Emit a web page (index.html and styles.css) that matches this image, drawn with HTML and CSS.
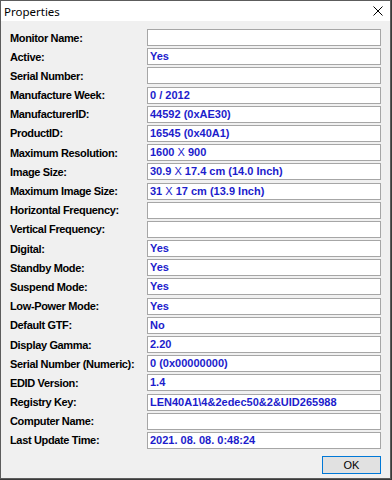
FILE: index.html
```html
<!DOCTYPE html>
<html lang="en">
<head>
    <meta charset="UTF-8">
    <title>Properties</title>
    <link rel="stylesheet" href="styles.css">
</head>
<body>
    <div class="window">
        <div class="titlebar">
            <span class="title">Properties</span>
            <svg class="close" width="10" height="10" viewBox="0 0 10 10">
                <path d="M0.5 0.5 L9.5 9.5 M9.5 0.5 L0.5 9.5" stroke="#000" stroke-width="1" fill="none"/>
            </svg>
        </div>

        <div class="content">
            <div class="props">
                <label>Monitor Name:</label><div class="field"></div>
                <label>Active:</label><div class="field">Yes</div>
                <label>Serial Number:</label><div class="field"></div>
                <label>Manufacture Week:</label><div class="field">0 / 2012</div>
                <label>ManufacturerID:</label><div class="field">44592 (0xAE30)</div>
                <label>ProductID:</label><div class="field">16545 (0x40A1)</div>
                <label>Maximum Resolution:</label><div class="field">1600 <span class="times">X</span> 900</div>
                <label>Image Size:</label><div class="field">30.9 <span class="times">X</span> 17.4 cm (14.0 Inch)</div>
                <label>Maximum Image Size:</label><div class="field">31 <span class="times">X</span> 17 cm (13.9 Inch)</div>
                <label>Horizontal Frequency:</label><div class="field"></div>
                <label>Vertical Frequency:</label><div class="field"></div>
                <label>Digital:</label><div class="field">Yes</div>
                <label>Standby Mode:</label><div class="field">Yes</div>
                <label>Suspend Mode:</label><div class="field">Yes</div>
                <label>Low-Power Mode:</label><div class="field">Yes</div>
                <label>Default GTF:</label><div class="field">No</div>
                <label>Display Gamma:</label><div class="field">2.20</div>
                <label>Serial Number (Numeric):</label><div class="field">0 (0x00000000)</div>
                <label>EDID Version:</label><div class="field">1.4</div>
                <label>Registry Key:</label><div class="field">LEN40A1\4&amp;2edec50&amp;2&amp;UID265988</div>
                <label>Computer Name:</label><div class="field"></div>
                <label>Last Update Time:</label><div class="field">2021. 08. 08. 0:48:24</div>
            </div>

            <div class="buttons">
                <button class="ok">OK</button>
            </div>
        </div>
    </div>
</body>
</html>
```

FILE: styles.css
```css
* {
    box-sizing: border-box;
    margin: 0;
    padding: 0;
}

body {
    width: 392px;
    height: 480px;
    background-color: #3a3a3a;
    font-family: "Liberation Sans", Arial, sans-serif;
}

.window {
    width: 391px;
    height: 479px;
    border: 1px solid #5c5c5c;
    background: #f0f0f0;
    display: flex;
    flex-direction: column;
}

.titlebar {
    height: 20px;
    background: white;
    display: flex;
    align-items: center;
    justify-content: space-between;
    padding: 0 7px 0 3px;
}

.title {
    font-family: "Noto Sans", sans-serif;
    font-size: 11.5px;
    color: #000;
}

.content {
    padding: 8px 9px 0 9px;
}

.props {
    display: grid;
    grid-template-columns: 137px 234px;
    grid-auto-rows: 17px;
    row-gap: 2.19px;
    align-items: center;
}

.props label {
    font-size: 11px;
    font-weight: bold;
    letter-spacing: -0.35px;
    color: #000;
}

.field {
    height: 17px;
    background: white;
    border: 1px solid #a6a6a6;
    padding-left: 2px;
    font-size: 11px;
    font-weight: bold;
    line-height: 15px;
    color: #1c1ccc;
    white-space: nowrap;
    overflow: hidden;
}

.field .times {
    font-weight: normal;
}

.buttons {
    display: flex;
    justify-content: flex-end;
    padding-top: 7px;
}

.ok {
    width: 59px;
    height: 18px;
    background: #e1e1e1;
    border: 1px solid #0078d7;
    font-family: "Liberation Sans", Arial, sans-serif;
    font-size: 11px;
    color: #000;
}
```
